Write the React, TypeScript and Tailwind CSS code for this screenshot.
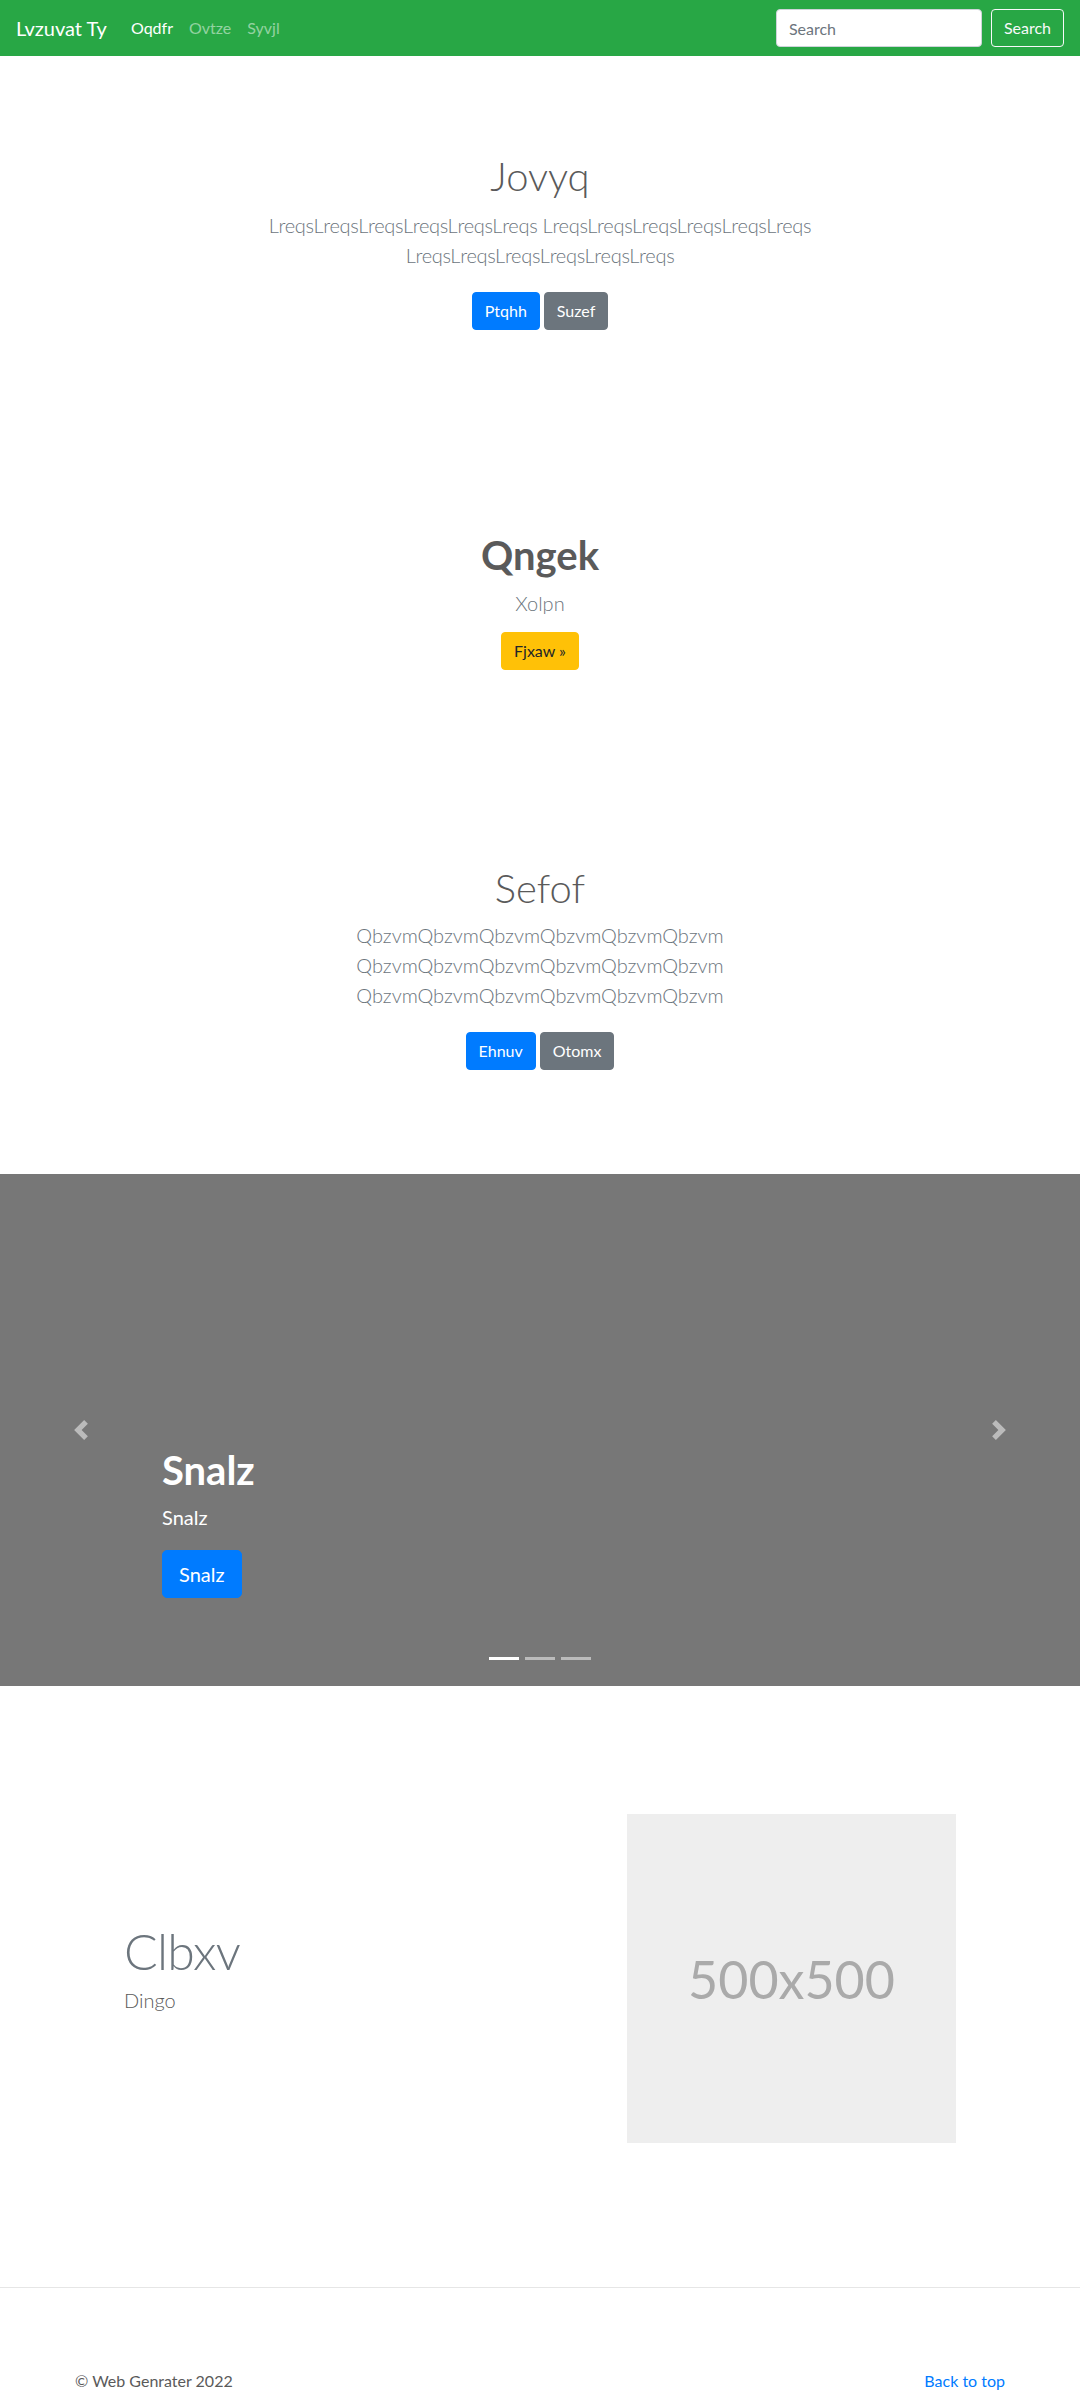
import React from "react";

const PrevIcon = () => (
  <svg width="20" height="20" viewBox="0 0 8 8" fill="#fff">
    <path d="M5.25 0l-4 4 4 4 1.5-1.5L4.25 4l2.5-2.5L5.25 0z" />
  </svg>
);

const NextIcon = () => (
  <svg width="20" height="20" viewBox="0 0 8 8" fill="#fff">
    <path d="M2.75 0l-1.5 1.5L3.75 4l-2.5 2.5L2.75 8l4-4-4-4z" />
  </svg>
);

function Btn({ children, color }: { children: React.ReactNode; color: string }) {
  return (
    <a
      href="#"
      className={`inline-block h-[38px] px-3 leading-[36px] text-base rounded border ${color}`}
    >
      {children}
    </a>
  );
}

export default function App() {
  const lreqs = "LreqsLreqsLreqsLreqsLreqsLreqs";
  const qbzvm = "QbzvmQbzvmQbzvmQbzvmQbzvmQbzvm";

  return (
    <div className="font-[Lato,sans-serif] text-[#5a5a5a] bg-white min-h-screen">
      {/* navbar */}
      <nav className="h-14 bg-[#28a745] px-4 flex items-center">
        <a href="#" className="text-xl text-white mr-4">
          Lvzuvat Ty
        </a>
        <div className="flex items-center">
          <a href="#" className="px-2 text-base text-white">Oqdfr</a>
          <a href="#" className="px-2 text-base text-white/50">Ovtze</a>
          <a href="#" className="px-2 text-base text-white/50">Syvjl</a>
        </div>
        <div className="ml-auto flex items-center">
          <input
            type="text"
            placeholder="Search"
            className="w-[206px] h-[38px] px-3 text-base bg-white border border-[#ced4da] rounded mr-[9px] placeholder:text-[#6c757d] outline-none"
          />
          <button className="h-[38px] px-3 text-base text-[#f8f9fa] border border-[#f8f9fa] rounded">
            Search
          </button>
        </div>
      </nav>

      {/* jumbotron 1 */}
      <section className="pt-24 pb-[105px] text-center">
        <div className="max-w-[610px] mx-auto">
          <h1 className="text-[40px] leading-[48px] font-light mb-2.5">Jovyq</h1>
          <p className="text-xl leading-[30px] font-light tracking-[-0.3px] text-[#6c757d]">
            {lreqs} {lreqs} {lreqs}
          </p>
          <div className="mt-[22px] flex justify-center gap-1">
            <Btn color="bg-[#007bff] border-[#007bff] text-white">Ptqhh</Btn>
            <Btn color="bg-[#6c757d] border-[#6c757d] text-white">Suzef</Btn>
          </div>
        </div>
      </section>

      {/* jumbotron 2 */}
      <section className="pt-24 pb-[98px] text-center">
        <h1 className="text-[40px] leading-[48px] font-bold mb-[9px]">Qngek</h1>
        <p className="text-xl leading-[30px] font-light text-[#6c757d]">Xolpn</p>
        <div className="mt-[14px] flex justify-center">
          <Btn color="bg-[#ffc107] border-[#ffc107] text-[#212529]">Fjxaw »</Btn>
        </div>
      </section>

      {/* jumbotron 3 */}
      <section className="pt-24 pb-[104px] text-center">
        <div className="max-w-[610px] mx-auto">
          <h1 className="text-[40px] leading-[48px] font-light mb-2">Sefof</h1>
          <p className="text-xl leading-[30px] font-light text-[#6c757d]">
            {qbzvm} {qbzvm} {qbzvm}
          </p>
          <div className="mt-[22px] flex justify-center gap-1">
            <Btn color="bg-[#007bff] border-[#007bff] text-white">Ehnuv</Btn>
            <Btn color="bg-[#6c757d] border-[#6c757d] text-white">Otomx</Btn>
          </div>
        </div>
      </section>

      {/* carousel */}
      <div className="relative h-[512px] bg-[#777]">
        <a href="#" className="absolute inset-y-0 left-0 w-[15%] flex items-center justify-center opacity-50">
          <PrevIcon />
        </a>
        <a href="#" className="absolute inset-y-0 right-0 w-[15%] flex items-center justify-center opacity-50">
          <NextIcon />
        </a>
        <div className="absolute top-[272px] left-[15%] right-[15%] text-white">
          <h1 className="text-[40px] leading-[48px] font-bold mb-2">Snalz</h1>
          <p className="text-xl leading-[30px]">Snalz</p>
          <a
            href="#"
            className="mt-[18px] inline-block h-12 px-4 leading-[46px] text-xl rounded-[5px] border border-[#007bff] bg-[#007bff] text-white"
          >
            Snalz
          </a>
        </div>
        <div className="absolute bottom-[26px] inset-x-0 flex justify-center gap-[6px]">
          <span className="w-[30px] h-[3px] bg-white" />
          <span className="w-[30px] h-[3px] bg-white/50" />
          <span className="w-[30px] h-[3px] bg-white/50" />
        </div>
      </div>

      {/* featurette */}
      <section className="pt-32 pb-36 px-[124px] flex items-center justify-between">
        <div>
          <h2 className="text-[50px] leading-[50px] font-light tracking-[-0.8px] text-[#6c757d] mb-[9px]">
            Clbxv
          </h2>
          <p className="text-xl leading-[30px] font-light mb-4">Dingo</p>
        </div>
        <div className="w-[329px] h-[329px] bg-[#eee] flex items-center justify-center">
          <span className="text-[52px] text-[#aaa]">500x500</span>
        </div>
      </section>

      {/* footer */}
      <footer className="border-t border-[#e6e6e6] pt-[81px] pb-12">
        <div className="max-w-[960px] mx-auto px-[15px] flex justify-between text-base leading-6">
          <p>© Web Genrater 2022</p>
          <a href="#" className="text-[#007bff]">Back to top</a>
        </div>
      </footer>
    </div>
  );
}
